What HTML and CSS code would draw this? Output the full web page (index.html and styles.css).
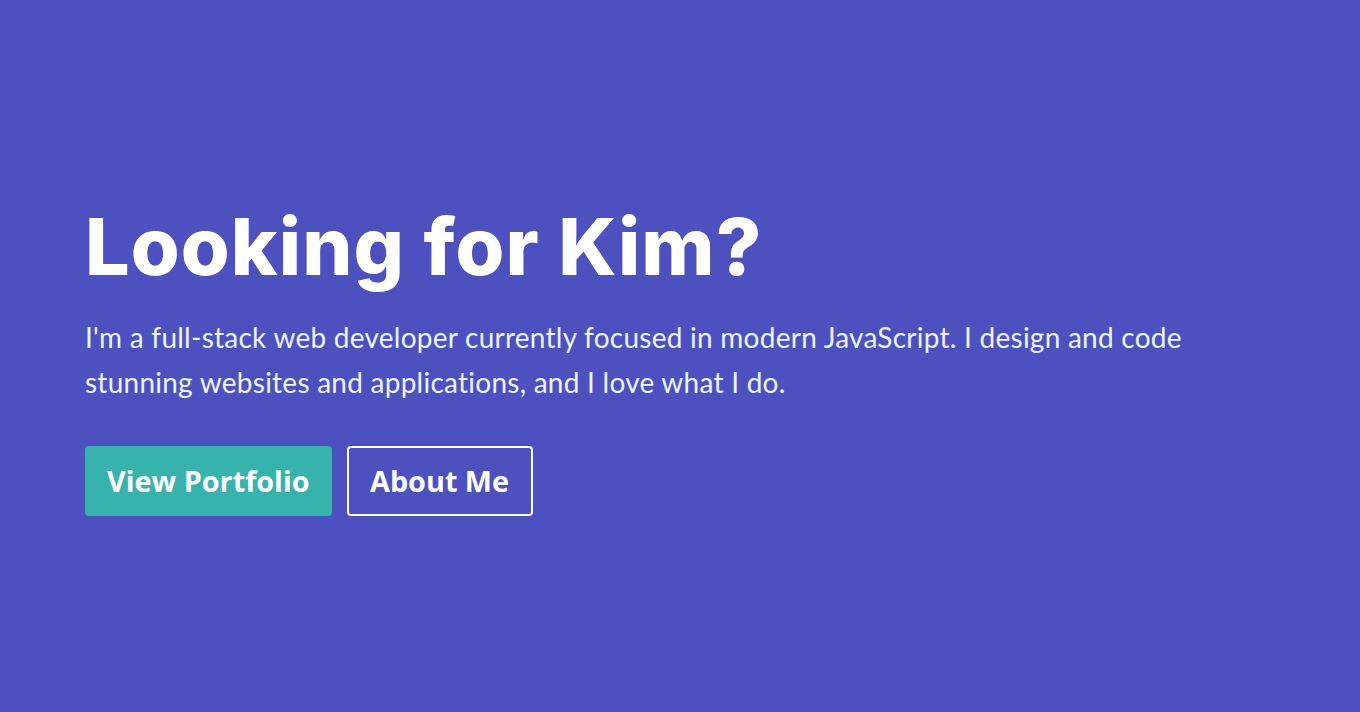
FILE: index.html
```html
<!DOCTYPE html>
<html lang="en">
<head>
<meta charset="utf-8">
<title>Kim</title>
<link rel="stylesheet" href="styles.css">
</head>
<body>
<section class="hero">
  <div class="hero-inner">
    <h1 class="title">Looking for Kim?</h1>
    <p class="lead">I'm a full-stack web developer currently focused in modern JavaScript. I design and code stunning websites and applications, and I love what I do.</p>
    <div class="actions">
      <a class="btn btn-primary" href="#">View Portfolio</a>
      <a class="btn btn-outline" href="#">About Me</a>
    </div>
  </div>
</section>
</body>
</html>
```

FILE: styles.css
```css
* { box-sizing: border-box; }
html, body { margin: 0; padding: 0; }
body {
  background: #4c51bf;
  font-family: "Lato", "Noto Sans", sans-serif;
}
.hero {
  height: 712px;
  padding: 198px 85px 0;
}
.hero-inner {
  width: 1160px;
}
.title {
  margin: 0;
  font-family: "Inter", "Noto Sans", sans-serif;
  font-weight: 800;
  font-size: 79px;
  line-height: 96px;
  letter-spacing: 1.1px;
  color: #ffffff;
}
.lead {
  margin: 21px 0 0;
  font-size: 28px;
  line-height: 44.8px;
  letter-spacing: 0.25px;
  color: #ebf4ff;
}
.actions {
  display: flex;
  gap: 15px;
  margin-top: 41px;
}
.btn {
  display: inline-flex;
  align-items: center;
  height: 70px;
  padding: 0 22px;
  border-radius: 4px;
  font-family: "Open Sans", "Noto Sans", sans-serif;
  font-weight: 700;
  font-size: 28.8px;
  color: #ffffff;
  text-decoration: none;
}
.btn-primary {
  background: #38b2ac;
}
.btn-outline {
  border: 2px solid #ffffff;
  padding: 0 21.5px;
}
```
